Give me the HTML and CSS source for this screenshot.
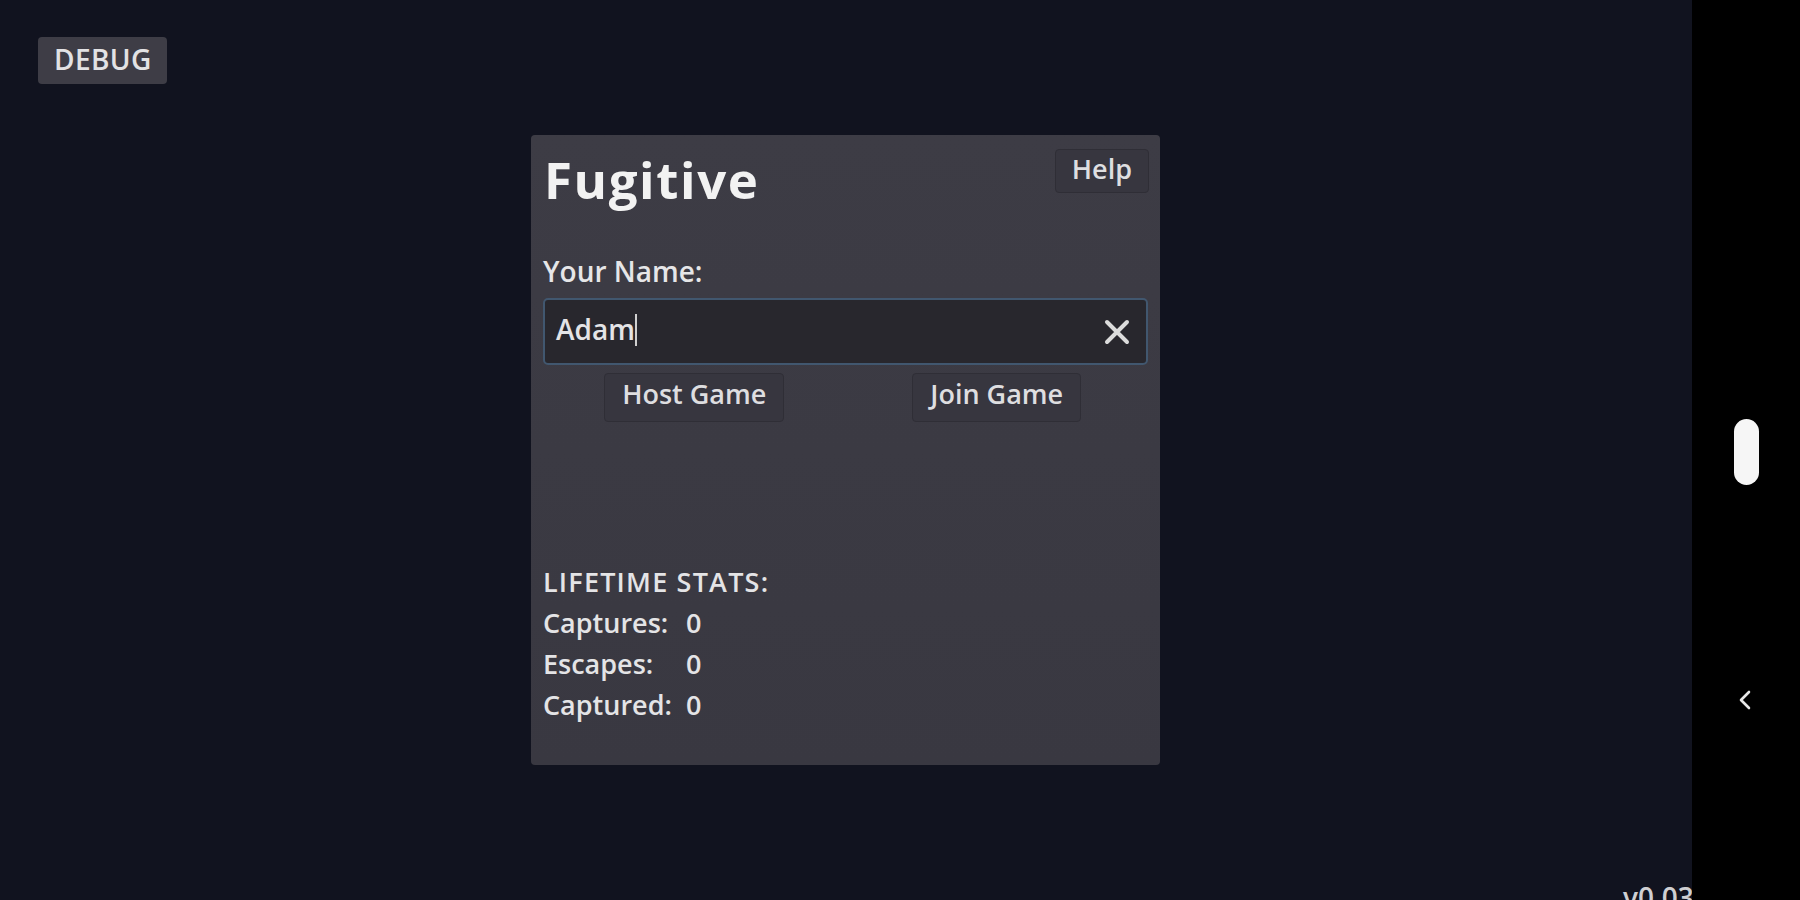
FILE: index.html
```html
<!DOCTYPE html>
<html>
<head>
<meta charset="utf-8">
<link rel="stylesheet" href="styles.css">
</head>
<body>
<div class="screen">
  <div class="stage">
    <button class="debug">DEBUG</button>
    <div class="panel">
      <div class="head">
        <h1 class="title">Fugitive</h1>
        <button class="btn help">Help</button>
      </div>
      <div class="label">Your Name:</div>
      <div class="input">
        <span class="value">Adam</span><span class="caret"></span>
        <svg class="clear" viewBox="0 0 28 28" width="28" height="28"><path d="M4 4 L24 24 M24 4 L4 24" stroke="#dcdcdc" stroke-width="4" stroke-linecap="round"/></svg>
      </div>
      <div class="actions">
        <div class="cell"><button class="btn">Host Game</button></div>
        <div class="cell"><button class="btn">Join Game</button></div>
      </div>
      <div class="stats">
        <div class="stats-head">LIFETIME STATS:</div>
        <div>Captures:</div><div>0</div>
        <div>Escapes:</div><div>0</div>
        <div>Captured:</div><div>0</div>
      </div>
    </div>
    <div class="version">v0.03</div>
  </div>
  <div class="navbar">
    <div class="pill"></div>
    <svg class="back" viewBox="0 0 14 20" width="14" height="20"><path d="M11 2 L3 10 L11 18" fill="none" stroke="#e8e8e8" stroke-width="2.6" stroke-linecap="round" stroke-linejoin="round"/></svg>
  </div>
</div>
</body>
</html>
```

FILE: styles.css
```css
* { box-sizing: border-box; }
html, body { margin: 0; padding: 0; }
body {
  width: 1800px;
  height: 900px;
  overflow: hidden;
  background: #11131f;
  font-family: "Open Sans", "Noto Sans", sans-serif;
  font-weight: 600;
  color: #e6e6e8;
}
.screen {
  position: relative;
  width: 1800px;
  height: 900px;
  display: flex;
}
.stage {
  position: relative;
  width: 1692px;
  height: 900px;
  display: flex;
  align-items: center;
  justify-content: center;
}
.debug {
  position: absolute;
  left: 38px;
  top: 37px;
  height: 47px;
  padding: 2px 15px 5px 16px;
  border: none;
  border-radius: 4px;
  background: #3e3d46;
  color: #e2e2e4;
  font: 600 28px/40px "Open Sans", sans-serif;
  letter-spacing: 0.4px;
}
.panel {
  width: 629px;
  height: 630px;
  margin-left: -1px;
  background: linear-gradient(#3d3c45, #393841);
  border-radius: 4px;
  padding: 14px 12px 40px;
  display: flex;
  flex-direction: column;
}
.head {
  display: flex;
  justify-content: space-between;
  align-items: flex-start;
}
.title {
  margin: 0 0 0 1px;
  font-size: 51px;
  line-height: 60px;
  font-weight: 700;
  color: #f2f2f2;
  letter-spacing: 1.6px;
}
.btn {
  font: 600 27px/40px "Open Sans", sans-serif;
  color: #dedee0;
  background: #37363f;
  border: 1px solid #2f2e36;
  border-radius: 4px;
  padding: 0 17px 7px;
  height: 49px;
}
.help {
  height: 44px;
  line-height: 38px;
  padding: 0 16px 4px;
  margin-right: -1px;
}
.label {
  margin-top: 42px;
  font-size: 28px;
  line-height: 40px;
}
.input {
  margin-top: 7px;
  height: 67px;
  border: 2px solid #41576f;
  border-radius: 5px;
  background: #28272d;
  padding: 9px 15px 0 11px;
  display: flex;
  align-items: flex-start;
  font-size: 28px;
  line-height: 40px;
  color: #e4e4e6;
}
.caret {
  display: inline-block;
  width: 2px;
  height: 32px;
  margin-top: 5px;
  background: #d0d0d0;
}
.clear {
  margin-left: auto;
  margin-top: 9px;
}
.actions {
  margin-top: 8px;
  display: grid;
  grid-template-columns: 1fr 1fr;
}
.cell {
  display: flex;
  justify-content: center;
}
.stats {
  margin-top: auto;
  display: grid;
  grid-template-columns: 143px auto;
  font-size: 27px;
  line-height: 41px;
  color: #e4e4e6;
}
.stats-head {
  grid-column: 1 / -1;
  letter-spacing: 1.2px;
}
.version {
  position: absolute;
  left: 1623px;
  top: 877px;
  font-size: 28px;
  line-height: 40px;
  color: #cfcfd2;
  white-space: nowrap;
}
.navbar {
  position: absolute;
  right: 0;
  top: 0;
  width: 108px;
  height: 900px;
  background: #000;
  display: flex;
  flex-direction: column;
  align-items: center;
  z-index: 2;
}
.pill {
  margin-top: 419px;
  margin-left: 0;
  width: 25px;
  height: 66px;
  border-radius: 13px;
  background: #f6f6f6;
}
.back {
  margin-top: 205px;
  margin-left: -3px;
}
```
